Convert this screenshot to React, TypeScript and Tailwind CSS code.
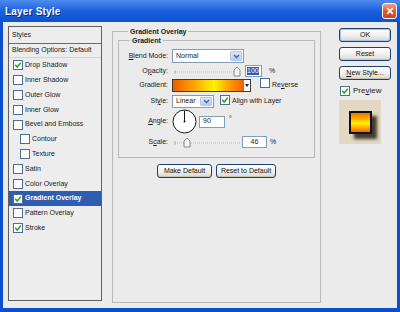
import React from 'react';

const FONT = { fontFamily: '"Liberation Sans", Arial, sans-serif' };

function Check({ on }: { on?: boolean }) {
  return (
    <span className="inline-flex h-[10px] w-[10px] shrink-0 items-center justify-center border border-[#4d6d92] bg-white">
      {on && (
        <svg viewBox="0 0 8 8" className="h-[8px] w-[8px]">
          <path d="M1.2 3.8 L3.2 6 L6.8 1.6" fill="none" stroke="#22a322" strokeWidth="1.5" />
        </svg>
      )}
    </span>
  );
}

function DropBtn({ small }: { small?: boolean }) {
  return (
    <span
      className={`flex h-full ${small ? 'w-[6px] bg-white' : 'w-[12px] rounded-[1px] border border-[#b4c8ee] bg-gradient-to-b from-[#dbe6fc] to-[#b4cbf6]'} shrink-0 items-center justify-center`}
    >
      <svg viewBox="0 0 8 6" className={small ? 'h-[3px] w-[4px]' : 'h-[5px] w-[7px]'}>
        {small ? (
          <path d="M0 0 L8 0 L4 6 Z" fill="#222" />
        ) : (
          <path d="M1 1.2 L4 4.2 L7 1.2" fill="none" stroke="#4d6185" strokeWidth="1.6" />
        )}
      </svg>
    </span>
  );
}

function Slider({ pos }: { pos: number }) {
  return (
    <svg width="67" height="11" viewBox="0 0 67 11" className="shrink-0">
      <line x1="1" y1="4.5" x2="1" y2="7.5" stroke="#9a9a9a" />
      <line x1="1" y1="6" x2="66" y2="6" stroke="#b8b8b8" strokeDasharray="1 1" />
      <path
        d={`M${pos - 3} 10 L${pos - 3} 4 L${pos} 1 L${pos + 3} 4 L${pos + 3} 10 Z`}
        fill="#f4f4f4"
        stroke="#6e6e6e"
        strokeWidth="0.8"
      />
    </svg>
  );
}

function XpButton({ label, w, def }: { label: React.ReactNode; w: string; def?: boolean }) {
  return (
    <div
      className={`flex h-[14px] ${w} items-center justify-center rounded-[3px] border border-[#1f3f6e] bg-gradient-to-b from-white via-[#f1f1ee] to-[#d9d8d0] text-[7px] text-[#111] ${def ? 'shadow-[inset_0_0_0_1px_#a9c3ee]' : 'shadow-[inset_0_-1px_0_#c6c4b8]'}`}
    >
      {label}
    </div>
  );
}

const styleItems: { label: string; on?: boolean; indent?: boolean; selected?: boolean }[] = [
  { label: 'Drop Shadow', on: true },
  { label: 'Inner Shadow' },
  { label: 'Outer Glow' },
  { label: 'Inner Glow' },
  { label: 'Bevel and Emboss' },
  { label: 'Contour', indent: true },
  { label: 'Texture', indent: true },
  { label: 'Satin' },
  { label: 'Color Overlay' },
  { label: 'Gradient Overlay', on: true, selected: true },
  { label: 'Pattern Overlay' },
  { label: 'Stroke', on: true },
];

export default function App() {
  return (
    <div className="h-[312px] w-[400px] overflow-hidden bg-[#0a4fd0]" style={FONT}>
      {/* title bar */}
      <div className="flex h-[22px] items-center justify-between bg-gradient-to-b from-[#4f8cf0] via-[#1a5fdc] to-[#0c52cf] pl-[5px] pr-[3px]">
        <span className="text-[10px] font-bold tracking-[0.2px] text-white [text-shadow:1px_1px_0_#0a2d7a]">Layer Style</span>
        <span className="flex h-[16px] w-[15px] items-center justify-center rounded-[3px] border border-white bg-gradient-to-b from-[#f0a083] via-[#df5b35] to-[#c9441f]">
          <svg viewBox="0 0 8 8" className="h-[8px] w-[8px]">
            <path d="M1.2 1.2 L6.8 6.8 M6.8 1.2 L1.2 6.8" stroke="white" strokeWidth="1.7" />
          </svg>
        </span>
      </div>

      {/* body */}
      <div className="mx-[3px] flex h-[286px] bg-[#ebebeb] text-[7px] text-[#1a1a1a]">
        {/* styles list */}
        <div className="ml-[5px] mt-[4px] flex h-[275px] w-[94px] flex-col border border-[#5f5f5f] bg-[#ededed]">
          <div className="flex h-[17px] shrink-0 items-center border-b border-[#6a6a6a] pl-[3px]">Styles</div>
          <div className="flex h-[14px] shrink-0 items-center border-b border-[#d2d2d2] pl-[3px]">Blending Options: Default</div>
          {styleItems.map((it) => (
            <div
              key={it.label}
              className={`flex h-[14.8px] shrink-0 items-center gap-[2px] ${it.indent ? 'pl-[11px]' : 'pl-[4px]'} ${it.selected ? 'bg-[#2f5db0] font-bold text-white' : ''}`}
            >
              <Check on={it.on} />
              <span>{it.label}</span>
            </div>
          ))}
        </div>

        {/* main panel */}
        <fieldset className="ml-[10px] mt-[5px] h-[276px] w-[209px] border border-[#b9b9b9] px-[5px]">
          <legend className="ml-[10px] px-[2px] text-[7px] font-bold leading-[9px]">Gradient Overlay</legend>

          <fieldset className="border border-[#b9b9b9] pb-[8px]">
            <legend className="ml-[11px] px-[2px] text-[7px] font-bold leading-[9px]">Gradient</legend>

            {/* blend mode */}
            <div className="mt-[3px] flex h-[16px] items-center">
              <span className="w-[49px] text-right"><u>B</u>lend Mode:</span>
              <div className="ml-[4px] flex h-[14px] w-[72px] items-center justify-between border border-[#7f9db9] bg-white pl-[3px] pr-[1px] py-[1px]">
                <span>Normal</span>
                <DropBtn />
              </div>
            </div>

            {/* opacity */}
            <div className="flex h-[14px] items-center">
              <span className="w-[49px] text-right">O<u>p</u>acity:</span>
              <span className="ml-[6px]"><Slider pos={63} /></span>
              <div className="ml-[4px] flex h-[12px] w-[17px] items-center border border-[#7f9db9] bg-white pl-[1px]">
                <span className="bg-[#2f5db0] leading-[8px] text-white">100</span>
              </div>
              <span className="ml-[7px]">%</span>
            </div>

            {/* gradient */}
            <div className="flex h-[14px] items-center">
              <span className="w-[49px] text-right">Gradient:</span>
              <div className="ml-[4px] flex h-[13px] w-[79px] border border-[#3a3a3a] bg-white">
                <div className="h-full flex-1 bg-[linear-gradient(90deg,#f05a00_0%,#ff9a00_25%,#fff200_58%,#ff9400_82%,#f06000_100%)]" />
                <DropBtn small />
              </div>
              <span className="ml-[9px]"><Check /></span>
              <span className="ml-[2px]">Re<u>v</u>erse</span>
            </div>

            {/* style */}
            <div className="mt-[2px] flex h-[14px] items-center">
              <span className="w-[49px] text-right">St<u>y</u>le:</span>
              <div className="ml-[4px] flex h-[13px] w-[42px] items-center justify-between border border-[#7f9db9] bg-white pl-[3px] pr-[1px] py-[1px]">
                <span>Linear</span>
                <DropBtn />
              </div>
              <span className="ml-[6px]"><Check on /></span>
              <span className="ml-[2px]">Ali<u>g</u>n with Layer</span>
            </div>

            {/* angle */}
            <div className="flex h-[27px] items-center">
              <span className="w-[49px] text-right"><u>A</u>ngle:</span>
              <svg width="25" height="25" viewBox="0 0 25 25" className="ml-[4px] shrink-0">
                <circle cx="12.5" cy="12.5" r="11.5" fill="white" stroke="#1a1a1a" strokeWidth="1" />
                <line x1="12.5" y1="12.5" x2="12.5" y2="1.5" stroke="#1a1a1a" strokeWidth="1" />
                <circle cx="12.5" cy="12.5" r="1" fill="#1a1a1a" />
              </svg>
              <div className="ml-[2px] flex h-[12px] w-[26px] items-center border border-[#7f9db9] bg-white pl-[3px]">90</div>
              <span className="ml-[4px] self-start pt-[6px]">°</span>
            </div>

            {/* scale */}
            <div className="flex h-[14px] items-center">
              <span className="w-[49px] text-right">S<u>c</u>ale:</span>
              <span className="ml-[6px]"><Slider pos={13} /></span>
              <div className="ml-[1px] flex h-[12px] w-[25px] items-center justify-center border border-[#7f9db9] bg-white">46</div>
              <span className="ml-[3px]">%</span>
            </div>
          </fieldset>

          <div className="mt-[6px] flex justify-center gap-[4px]">
            <XpButton label="Make Default" w="w-[55px]" />
            <XpButton label="Reset to Default" w="w-[60px]" />
          </div>
        </fieldset>

        {/* right column */}
        <div className="ml-[18px] mt-[6px] flex w-[52px] flex-col">
          <XpButton label="OK" w="w-[52px]" def />
          <div className="mt-[5px]"><XpButton label="Reset" w="w-[52px]" /></div>
          <div className="mt-[5px]"><XpButton label={<span><u>N</u>ew Style...</span>} w="w-[52px]" /></div>
          <div className="ml-[1px] mt-[5px] flex items-center gap-[3px]">
            <Check on />
            <span className="text-[8px]">Pre<u>v</u>iew</span>
          </div>
          <div className="mt-[3px] flex h-[44px] w-[42px] items-start bg-[#e2d8c3] pl-[10px] pt-[11px]">
            <div className="h-[23px] w-[23px] border-2 border-[#111] bg-[linear-gradient(180deg,#f27000_0%,#ffb000_30%,#fff000_55%,#ffa000_80%,#f06800_100%)] shadow-[5px_5px_3px_rgba(40,30,20,0.85)]" />
          </div>
        </div>
      </div>
    </div>
  );
}
